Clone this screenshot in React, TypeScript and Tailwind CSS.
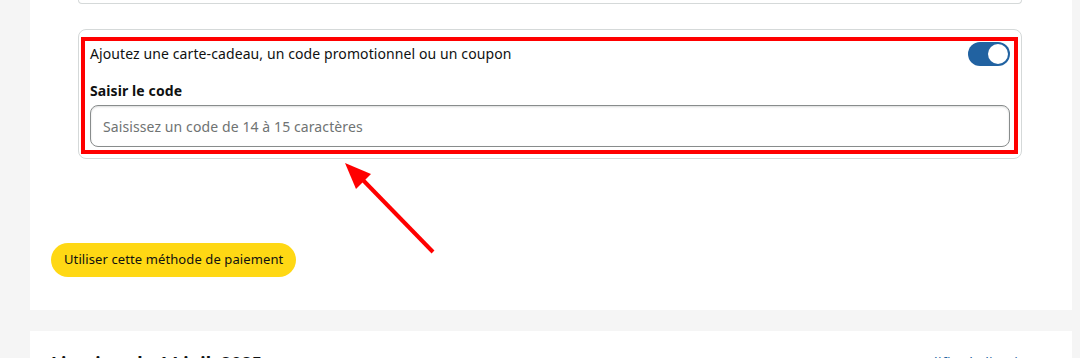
import React from 'react';

const Toggle: React.FC = () => (
  <div className="flex h-[24px] w-[42px] items-center justify-end rounded-full bg-[#2162a1] p-[2px]">
    <div className="h-[20px] w-[20px] rounded-full bg-white" />
  </div>
);

const App: React.FC = () => {
  return (
    <div className="relative h-[358px] w-full overflow-hidden bg-[#f5f5f5] font-['Noto_Sans',sans-serif] text-[#0f1111]">
      {/* Payment panel */}
      <div className="ml-[30px] mr-[8px] bg-white px-[21px] pb-[33px]">
        {/* bottom edge of previous card */}
        <div className="ml-[27px] mr-[29px] h-[4px] rounded-b-lg border border-t-0 border-[#d5d9d9]" />

        {/* Promo code card */}
        <div className="ml-[27px] mr-[29px] mt-[25px] rounded-lg border border-[#d5d9d9] pb-[4px] pl-[2px] pr-[3px] pt-[7px]">
          <div className="border-4 border-[#ff0000] pb-[3px] pl-[5px] pr-[4px] pt-[1px]">
            <div className="flex h-[24px] items-center justify-between">
              <span className="text-[14px] leading-5 tracking-[0.1px]">Ajoutez une carte-cadeau, un code promotionnel ou un coupon</span>
              <Toggle />
            </div>
            <div className="mt-[15px] mb-[4px] text-[14px] font-bold leading-5 tracking-[0.1px]">Saisir le code</div>
            <input
              type="text"
              placeholder="Saisissez un code de 14 à 15 caractères"
              className="block h-[42px] w-full rounded-lg border border-[#888c8c] bg-white px-[12px] text-[14px] tracking-[0.1px] shadow-[inset_0_1px_2px_rgba(15,17,17,0.15)] outline-none placeholder:text-[#6f7373]"
            />
          </div>
        </div>

        <button className="mt-[84px] flex h-[34px] items-center rounded-full bg-[#ffd814] px-[13px] text-[13px] tracking-[0.1px] text-[#0f1111]">
          Utiliser cette méthode de paiement
        </button>
      </div>

      {/* Next panel */}
      <div className="ml-[30px] mr-[8px] mt-[21px] flex items-start justify-between bg-white px-[21px] pt-[20px]">
        <h2 className="text-[18px] font-bold leading-6">Livraison le 14 juil. 2025</h2>
        <span className="mr-[8px] mt-[2px] text-[14px] leading-5 tracking-[0.3px] text-[#2162a1]">Modifier la livraison</span>
      </div>

      {/* Annotation arrow */}
      <svg className="pointer-events-none absolute left-0 top-0" width="1080" height="358" viewBox="0 0 1080 358">
        <line x1="433" y1="252" x2="360" y2="177" stroke="#ff0000" strokeWidth="4" />
        <polygon points="345,163 371,174 356,189" fill="#ff0000" />
      </svg>
    </div>
  );
};

export default App;
